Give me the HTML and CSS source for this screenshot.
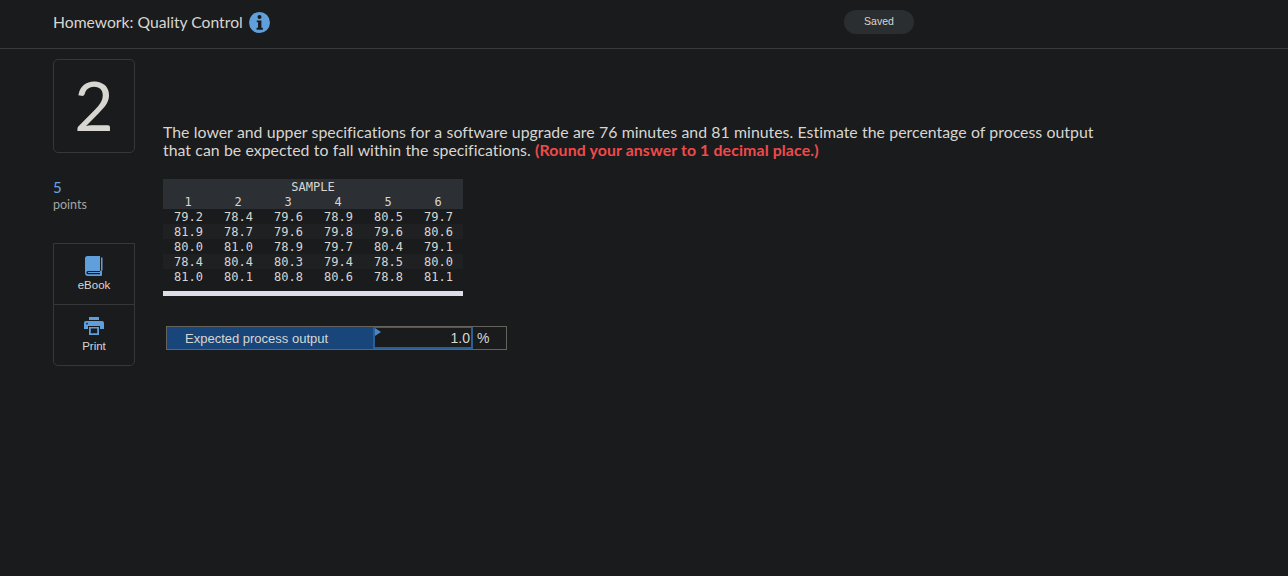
FILE: index.html
```html
<!DOCTYPE html>
<html lang="en">
<head>
<meta charset="UTF-8">
<meta name="viewport" content="width=device-width, initial-scale=1.0">
<title>Homework: Quality Control</title>
<link rel="stylesheet" href="styles.css">
</head>
<body>

<header class="top-bar">
  <div class="title-wrap">
    <span class="title">Homework: Quality Control</span>
    <svg class="info-icon" viewBox="0 0 20 20" width="21" height="21">
      <circle cx="10" cy="10" r="10" fill="#5f9fdc"/>
      <circle cx="10" cy="4.8" r="1.9" fill="#1a1b1d"/>
      <path d="M7.4 8h4.4v7h1.4v1.8H7.2V15h1.4v-5.2H7.4z" fill="#1a1b1d"/>
    </svg>
  </div>
  <span class="saved">Saved</span>
</header>

<main class="question">
  <aside class="side">
    <div class="number">2</div>
    <div class="points"><span class="points-value">5</span><br>points</div>
    <div class="tools">
      <div class="tool">
        <svg viewBox="0 0 18 20" width="18" height="20">
          <path d="M2.5 0H15v15H3a1.6 1.6 0 0 0 0 3.2h12V15l1-.6h1V19a1 1 0 0 1-1 1H3a3 3 0 0 1-3-3V2.5A2.5 2.5 0 0 1 2.5 0z" fill="#5f9fdc"/>
          <path d="M16 1.5h1.5v13H16z" fill="#5f9fdc"/>
          <path d="M3 16h12v1H3z" fill="#5f9fdc"/>
        </svg>
        <span>eBook</span>
      </div>
      <div class="tool">
        <svg viewBox="0 0 20 18" width="20" height="18">
          <path d="M5 0h10v3H5z" fill="#5f9fdc"/>
          <path d="M2 4h16a2 2 0 0 1 2 2v6h-4V9H4v3H0V6a2 2 0 0 1 2-2z" fill="#5f9fdc"/>
          <circle cx="3" cy="6.6" r="0.9" fill="#1a1b1d"/>
          <path d="M5 10h10v8H5zM6.8 11.6v4.7h6.4v-4.7z" fill="#5f9fdc" fill-rule="evenodd"/>
        </svg>
        <span>Print</span>
      </div>
    </div>
  </aside>

  <section class="content">
    <p class="prompt">The lower and upper specifications for a software upgrade are 76 minutes and 81 minutes. Estimate the percentage of process output that can be expected to fall within the specifications. <strong class="hint">(Round your answer to 1 decimal place.)</strong></p>

    <table class="samples">
      <thead>
        <tr><th colspan="6">SAMPLE</th></tr>
        <tr><th>1</th><th>2</th><th>3</th><th>4</th><th>5</th><th>6</th></tr>
      </thead>
      <tbody>
        <tr><td>79.2</td><td>78.4</td><td>79.6</td><td>78.9</td><td>80.5</td><td>79.7</td></tr>
        <tr><td>81.9</td><td>78.7</td><td>79.6</td><td>79.8</td><td>79.6</td><td>80.6</td></tr>
        <tr><td>80.0</td><td>81.0</td><td>78.9</td><td>79.7</td><td>80.4</td><td>79.1</td></tr>
        <tr><td>78.4</td><td>80.4</td><td>80.3</td><td>79.4</td><td>78.5</td><td>80.0</td></tr>
        <tr><td>81.0</td><td>80.1</td><td>80.8</td><td>80.6</td><td>78.8</td><td>81.1</td></tr>
      </tbody>
    </table>

    <div class="answer">
      <div class="answer-label">Expected process output</div>
      <div class="answer-value">1.0</div>
      <div class="answer-unit">%</div>
    </div>
  </section>
</main>

</body>
</html>
```

FILE: styles.css
```css
html, body {
  height: 100%;
}
body {
  margin: 0;
  background-color: #1a1b1d;
  color: #d8d6d0;
  font-family: Lato, "Open Sans", Arial, sans-serif;
  font-variant-ligatures: none;
  overflow: hidden;
}
.top-bar {
  display: flex;
  align-items: center;
  height: 48px;
  padding-left: 53px;
  border-bottom: 1px solid #3a3b3d;
}
.title-wrap {
  display: flex;
  align-items: center;
  width: 791px;
  gap: 6px;
  margin-top: -4px;
}
.title {
  font-size: 15.7px;
  color: #d8d6d0;
}
.saved {
  width: 70px;
  height: 24px;
  line-height: 23px;
  margin-top: -5px;
  border-radius: 12px;
  background-color: #2a2e31;
  text-align: center;
  font-family: "Liberation Sans", Arial, sans-serif;
  font-size: 10.5px;
  color: #d8d6d0;
}
.question {
  display: flex;
  padding: 10px 0 0 53px;
}
.side {
  width: 82px;
  flex-shrink: 0;
}
.number {
  box-sizing: border-box;
  height: 94px;
  border: 1px solid #36373a;
  border-radius: 5px;
  text-align: center;
  font-size: 68px;
  font-weight: 400;
  line-height: 90px;
  color: #d8d6d0;
}
.points {
  margin-top: 27px;
  font-size: 12.5px;
  line-height: 16px;
  color: #a5a5a2;
}
.points-value {
  font-size: 15px;
  line-height: 14px;
  color: #6aa5e0;
}
.tools {
  margin-top: 30px;
  border: 1px solid #36373a;
  border-radius: 0 0 5px 5px;
}
.tool {
  display: flex;
  flex-direction: column;
  align-items: center;
  height: 60px;
  padding-top: 12px;
  box-sizing: border-box;
  font-family: "Liberation Sans", Arial, sans-serif;
  font-size: 11.5px;
  color: #d8d6d0;
}
.tool + .tool {
  height: 61px;
  border-top: 1px solid #36373a;
}
.tool span {
  margin-top: 3px;
}
.tool + .tool span {
  margin-top: 5px;
}
.content {
  width: 940px;
  margin-left: 28px;
}
.prompt {
  margin: 64px 0 0;
  font-size: 15.85px;
  line-height: 18px;
  word-spacing: 0.3px;
  color: #d8d6d0;
}
.hint {
  color: #f04a4a;
  font-weight: 700;
  letter-spacing: 0.13px;
  word-spacing: 0;
}
.samples {
  width: 300px;
  margin-top: 20px;
  border-collapse: collapse;
  table-layout: fixed;
  border-bottom: 5px solid #dcdfe8;
  font-family: "DejaVu Sans Mono", "Liberation Mono", monospace;
  font-size: 12px;
  line-height: 14px;
  text-align: center;
  color: #d8d6d0;
}
.samples th {
  padding: 1px 0 0;
  font-weight: 400;
  background-color: #2c3034;
}
.samples td {
  padding: 1px 0 0 1px;
}
.samples tbody tr:nth-child(even) {
  background-color: #1f2022;
}
.samples tbody tr:last-child td {
  padding-bottom: 7px;
}
.answer {
  display: flex;
  box-sizing: border-box;
  width: 341px;
  height: 24px;
  margin: 30px 0 0 3px;
  border: 1px solid #66635c;
  font-family: "Liberation Sans", Arial, sans-serif;
  font-size: 13px;
  line-height: 23px;
}
.answer-label {
  width: 206px;
  padding-left: 18px;
  box-sizing: border-box;
  background-color: #18467a;
  color: #d8d6d0;
}
.answer-value {
  position: relative;
  box-sizing: border-box;
  width: 100px;
  padding-right: 1px;
  border: 2px solid #2a6098;
  border-width: 1px 2px 2px 2px;
  text-align: right;
  font-size: 14px;
  line-height: 21px;
}
.answer-value::before {
  content: "";
  position: absolute;
  top: 0;
  left: 0;
  border-left: 6px solid #4a86c5;
  border-top: 4px solid transparent;
  border-bottom: 4px solid transparent;
}
.answer-unit {
  padding-left: 4px;
  font-size: 14px;
}
```
